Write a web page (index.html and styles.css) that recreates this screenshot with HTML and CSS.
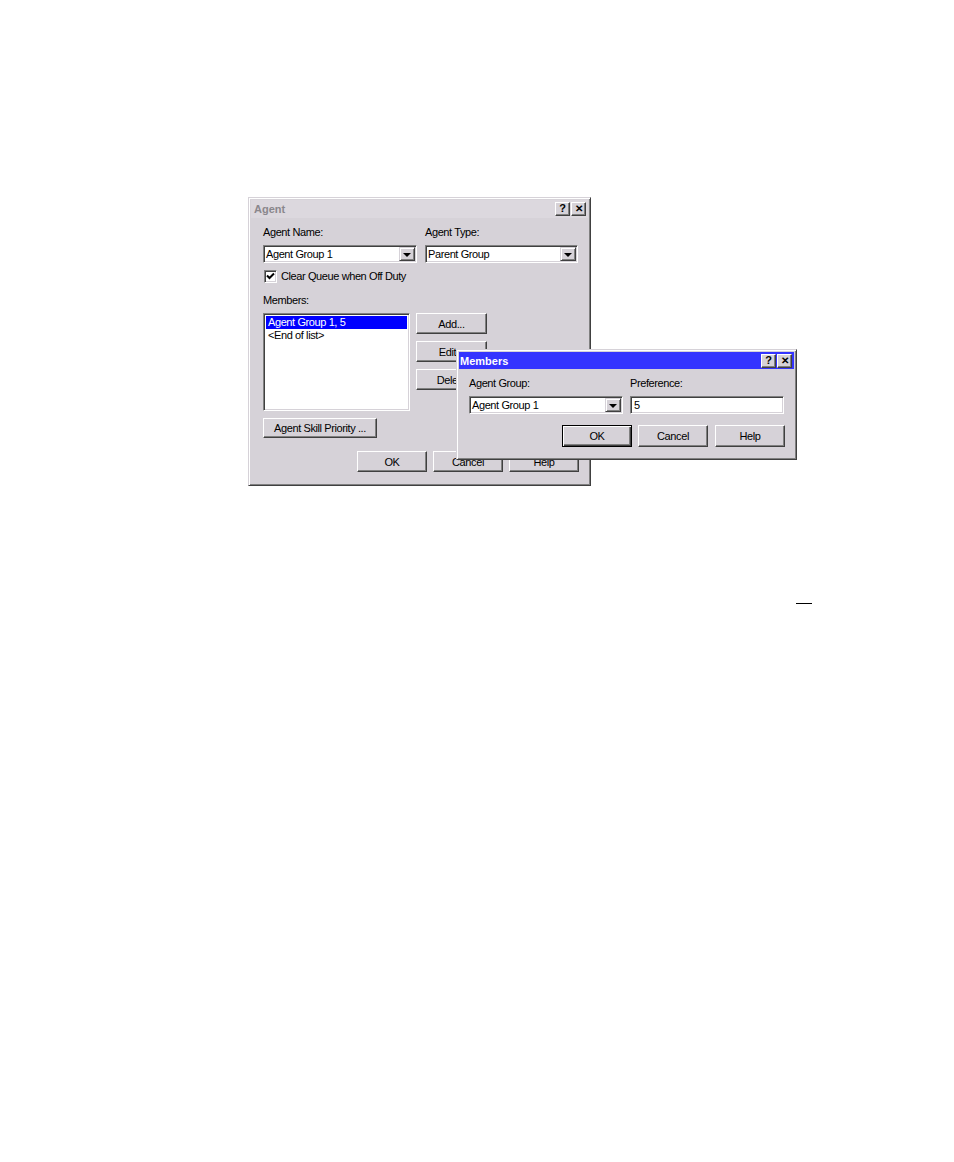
FILE: index.html
```html
<!DOCTYPE html>
<html lang="en">
<head>
    <meta charset="UTF-8">
    <title>Agent</title>
    <link rel="stylesheet" href="styles.css">
</head>
<body>

    <div class="desktop">

        <!-- Agent dialog (inactive) -->
        <div class="win win-agent">
            <div class="titlebar inactive">
                <span class="title">Agent</span>
                <div class="title-btns">
                    <span class="tbtn">?</span>
                    <span class="tbtn close">&#x2715;</span>
                </div>
            </div>
            <div class="win-body agent-body">
                <div class="field-row">
                    <div class="field">
                        <div class="label">Agent Name:</div>
                        <div class="combo">
                            <span class="combo-text">Agent Group 1</span>
                            <span class="combo-btn"><span class="arrow"></span></span>
                        </div>
                    </div>
                    <div class="field">
                        <div class="label">Agent Type:</div>
                        <div class="combo">
                            <span class="combo-text">Parent Group</span>
                            <span class="combo-btn"><span class="arrow"></span></span>
                        </div>
                    </div>
                </div>
                <div class="check">
                    <span class="checkbox">
                        <svg width="9" height="9" viewBox="0 0 9 9"><path d="M1 3.5 L3.5 6 L8 1.5" fill="none" stroke="#000" stroke-width="2"/></svg>
                    </span>
                    <span>Clear Queue when Off Duty</span>
                </div>
                <div class="label members-label">Members:</div>
                <div class="members-row">
                    <div class="listbox">
                        <div class="list-item selected">Agent Group 1, 5</div>
                        <div class="list-item">&lt;End of list&gt;</div>
                    </div>
                    <div class="side-btns">
                        <div class="btn">Add...</div>
                        <div class="btn">Edit...</div>
                        <div class="btn">Delete</div>
                    </div>
                </div>
                <div class="btn skill-btn">Agent Skill Priority ...</div>
                <div class="dlg-btns">
                    <div class="btn">OK</div>
                    <div class="btn">Cancel</div>
                    <div class="btn">Help</div>
                </div>
            </div>
        </div>

        <!-- Members dialog (active) -->
        <div class="win win-members">
            <div class="titlebar active">
                <span class="title">Members</span>
                <div class="title-btns">
                    <span class="tbtn">?</span>
                    <span class="tbtn close">&#x2715;</span>
                </div>
            </div>
            <div class="win-body members-body">
                <div class="field-row members-fields">
                    <div class="field">
                        <div class="label">Agent Group:</div>
                        <div class="combo">
                            <span class="combo-text">Agent Group 1</span>
                            <span class="combo-btn"><span class="arrow"></span></span>
                        </div>
                    </div>
                    <div class="field">
                        <div class="label">Preference:</div>
                        <div class="textbox">5</div>
                    </div>
                </div>
                <div class="dlg-btns members-btns">
                    <div class="btn default">OK</div>
                    <div class="btn">Cancel</div>
                    <div class="btn">Help</div>
                </div>
            </div>
        </div>

        <div class="mark"></div>
    </div>

</body>
</html>
```

FILE: styles.css
```css
/* Reset */
* {
    margin: 0;
    padding: 0;
    box-sizing: border-box;
}
body {
    background-color: #ffffff;
    font-family: 'Liberation Sans', Arial, sans-serif;
    font-size: 11px;
    letter-spacing: -0.4px;
    color: #000000;
}

.desktop {
    position: relative;
    width: 954px;
    height: 1162px;
}

/* Windows */
.win {
    position: absolute;
    background-color: #d6d2d8;
    border: 1px solid;
    border-color: #d6d2d8 #404040 #404040 #d6d2d8;
    box-shadow: inset 1px 1px 0 #ffffff, inset -1px -1px 0 #808080;
    padding: 2px;
}
.win-agent {
    left: 248px;
    top: 197px;
    width: 343px;
    height: 289px;
}
.win-members {
    left: 456px;
    top: 349px;
    width: 341px;
    height: 111px;
}

/* Title bars */
.titlebar {
    height: 18px;
    display: flex;
    align-items: center;
    justify-content: space-between;
    padding: 0 2px 0 3px;
}
.titlebar .title {
    font-weight: bold;
    font-size: 11px;
    letter-spacing: 0;
}
.titlebar.inactive {
    background-color: #dcd8de;
}
.titlebar.inactive .title {
    color: #8a878c;
}
.titlebar.active {
    background-color: #3434ff;
    padding-left: 1px;
    height: 17px;
}
.titlebar.active .title {
    color: #ffffff;
}
.title-btns {
    display: flex;
    gap: 1px;
}
.tbtn {
    width: 15px;
    height: 14px;
    background-color: #d6d2d8;
    border: 1px solid;
    border-color: #ffffff #404040 #404040 #ffffff;
    box-shadow: inset -1px -1px 0 #808080;
    font-weight: bold;
    font-size: 11px;
    line-height: 11px;
    letter-spacing: 0;
    text-align: center;
    color: #000000;
}
.tbtn.close {
    font-size: 10px;
}

/* Dialog bodies */
.agent-body {
    padding: 8px 10px 0 12px;
}
.members-body {
    padding: 8px 10px 0 10px;
}
.label {
    line-height: 13px;
    height: 13px;
    margin-bottom: 6px;
}

.field-row {
    display: flex;
    gap: 8px;
}
.members-fields {
    gap: 7px;
}
.field {
    width: 154px;
}
.field + .field {
    width: 153px;
}
.members-fields .field + .field {
    width: 154px;
}

/* Combo boxes and text boxes */
.combo,
.textbox {
    height: 18px;
    background-color: #ffffff;
    border: 1px solid;
    border-color: #808080 #ffffff #ffffff #808080;
    box-shadow: inset 1px 1px 0 #404040, inset -1px -1px 0 #d6d2d8;
    display: flex;
    align-items: center;
    padding: 1px;
}
.combo-text {
    flex: 1;
    padding-left: 1px;
    line-height: 14px;
}
.textbox {
    padding-left: 3px;
}
.combo-btn {
    width: 16px;
    height: 14px;
    background-color: #d6d2d8;
    border: 1px solid;
    border-color: #d6d2d8 #404040 #404040 #d6d2d8;
    box-shadow: inset 1px 1px 0 #ffffff, inset -1px -1px 0 #808080;
    display: flex;
    align-items: center;
    justify-content: center;
}
.arrow {
    width: 0;
    height: 0;
    border-left: 4px solid transparent;
    border-right: 4px solid transparent;
    border-top: 4px solid #000000;
    margin-top: 1px;
}

/* Checkbox */
.check {
    display: flex;
    align-items: center;
    gap: 4px;
    margin-top: 7px;
    height: 13px;
    line-height: 13px;
}
.checkbox {
    width: 13px;
    height: 13px;
    background-color: #ffffff;
    border: 1px solid;
    border-color: #808080 #ffffff #ffffff #808080;
    box-shadow: inset 1px 1px 0 #404040, inset -1px -1px 0 #d6d2d8;
    display: flex;
    align-items: center;
    justify-content: center;
    margin-left: 1px;
}

.members-label {
    margin-top: 11px;
}

/* Members list */
.members-row {
    display: flex;
    gap: 6px;
}
.listbox {
    width: 147px;
    height: 98px;
    background-color: #ffffff;
    border: 1px solid;
    border-color: #808080 #ffffff #ffffff #808080;
    box-shadow: inset 1px 1px 0 #404040, inset -1px -1px 0 #d6d2d8;
    padding: 2px;
}
.list-item {
    height: 13px;
    line-height: 13px;
    padding-left: 2px;
}
.list-item.selected {
    background-color: #0000ff;
    color: #ffffff;
}
.side-btns {
    display: flex;
    flex-direction: column;
    gap: 7px;
}
.side-btns .btn {
    width: 71px;
}

/* Buttons */
.btn {
    height: 21px;
    width: 70px;
    background-color: #d6d2d8;
    border: 1px solid;
    border-color: #ffffff #404040 #404040 #ffffff;
    box-shadow: inset -1px -1px 0 #808080;
    display: flex;
    align-items: center;
    justify-content: center;
}
.btn.default {
    border-color: #000000;
    box-shadow: inset 1px 1px 0 #ffffff, inset -1px -1px 0 #404040, inset -2px -2px 0 #808080;
}
.skill-btn {
    width: 114px;
    height: 20px;
    margin-top: 7px;
}
.dlg-btns {
    display: flex;
    justify-content: flex-end;
    gap: 6px;
    margin-top: 13px;
    margin-right: -1px;
}
.members-btns {
    margin-top: 11px;
}
.members-btns .btn {
    height: 22px;
}
.members-btns .btn + .btn + .btn {
    margin-left: 1px;
}

/* Stray mark on the page */
.mark {
    position: absolute;
    left: 796px;
    top: 603px;
    width: 16px;
    height: 1px;
    background-color: #000000;
}
```
